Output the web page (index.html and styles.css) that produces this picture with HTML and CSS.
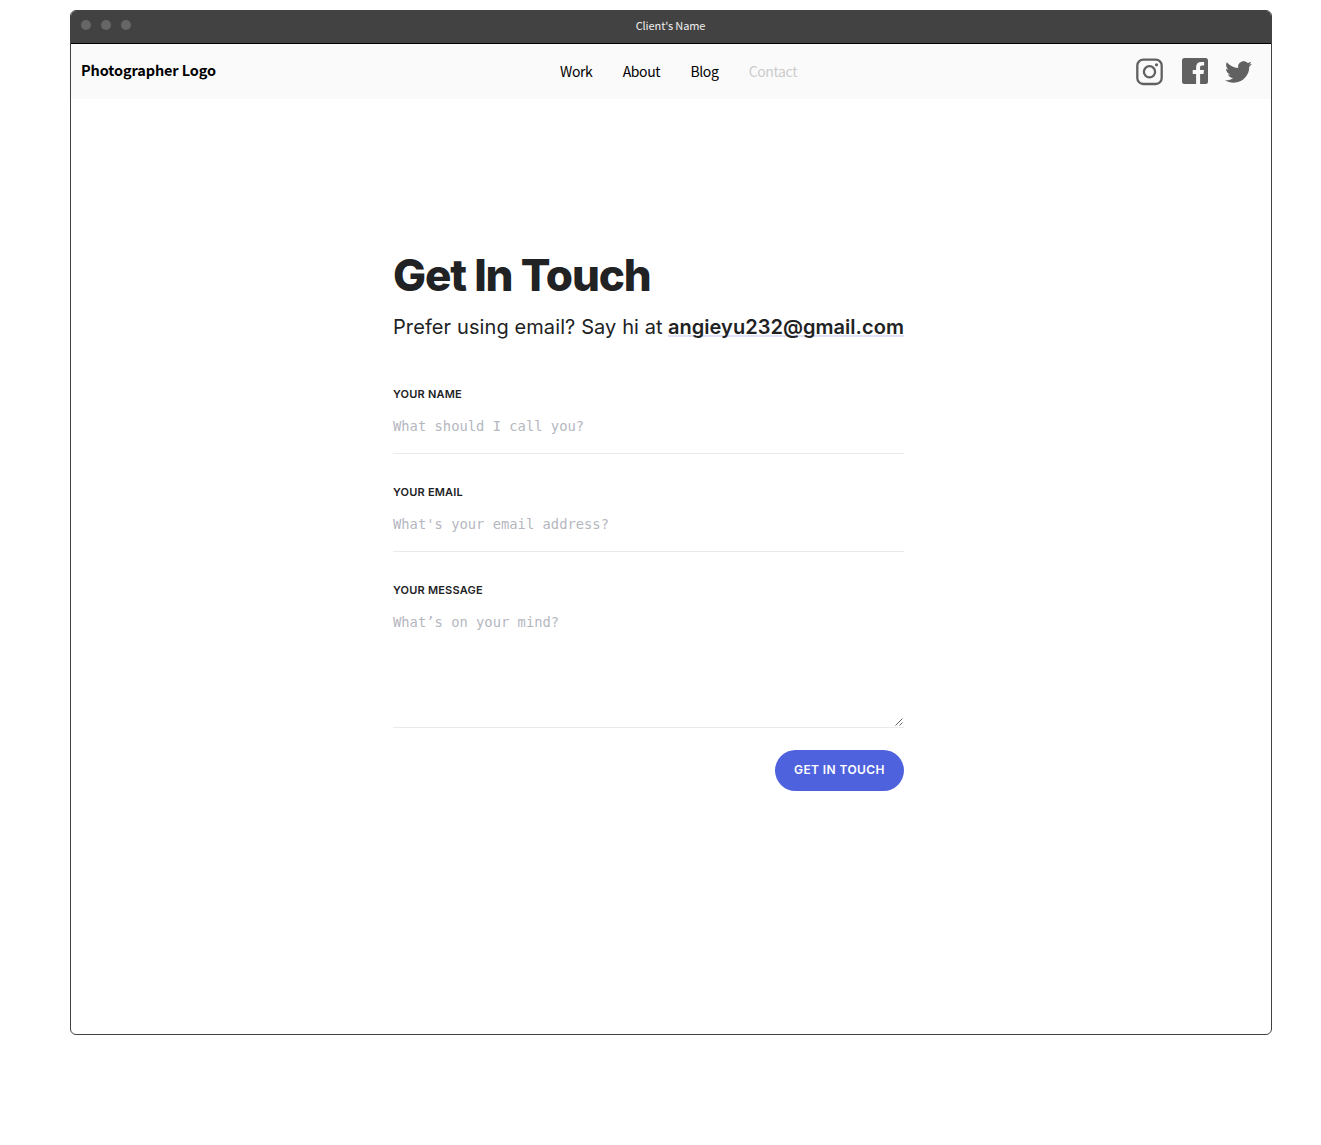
FILE: index.html
```html
<!DOCTYPE html>
<html lang="en">
<head>
<meta charset="utf-8">
<title>Client's Name</title>
<link rel="stylesheet" href="styles.css">
</head>
<body>
<div class="window">
  <div class="titlebar">
    <div class="dots"><i></i><i></i><i></i></div>
    <span class="title">Client's Name</span>
  </div>
  <header class="header">
    <div class="logo"><span>Photographer Logo</span></div>
    <nav class="nav"><a>Work</a><a>About</a><a>Blog</a><a class="current">Contact</a></nav>
    <div class="social">
      <svg class="instagram" width="28" height="28" viewBox="0 0 28 28"><rect x="1.300" y="1.600" width="24.400" height="24.400" rx="6" fill="none" stroke="#616161" stroke-width="2.300"/><circle cx="13.500" cy="13.800" r="5.600" fill="none" stroke="#616161" stroke-width="2.300"/><circle cx="20.500" cy="6.800" r="1.600" fill="#616161"/></svg>
      <svg class="facebook" width="26" height="26" viewBox="0 0 26 26"><path fill="#616161" d="M2.500 0H23.500Q26 0 26 2.500V23.500Q26 26 23.500 26H18.100V16H21.500L22 12H18.100V9.500C18.100 8.300 18.500 7.600 20 7.600H22.100V4.100C21.700 4 20.500 3.900 19.100 3.900C16.100 3.900 14.100 5.700 14.100 9V12H10.700V16H14.100V26H2.500Q0 26 0 23.500V2.500Q0 0 2.500 0Z"/></svg>
      <svg class="twitter" width="27" height="22" viewBox="0 2 24 20" preserveAspectRatio="none"><path fill="#616161" d="M23.954 4.569c-.885.389-1.830.654-2.825.775 1.014-.611 1.794-1.574 2.163-2.723-.951.555-2.005.959-3.127 1.184-.896-.959-2.173-1.559-3.591-1.559-2.717 0-4.920 2.203-4.920 4.917 0 .390.045.765.127 1.124C7.691 8.094 4.066 6.130 1.640 3.161c-.427.722-.666 1.561-.666 2.475 0 1.710.870 3.213 2.188 4.096-.807-.026-1.566-.248-2.228-.616v.061c0 2.385 1.693 4.374 3.946 4.827-.413.111-.849.171-1.296.171-.314 0-.615-.030-.916-.086.631 1.953 2.445 3.377 4.604 3.417-1.680 1.319-3.809 2.105-6.102 2.105-.390 0-.779-.023-1.170-.067 2.189 1.394 4.768 2.209 7.557 2.209 9.054 0 13.999-7.496 13.999-13.986 0-.209 0-.420-.015-.630.961-.689 1.800-1.560 2.460-2.548z"/></svg>
    </div>
  </header>
  <main class="contact">
    <h1><span>Get In Touch</span></h1>
    <p class="intro"><span class="lead">Prefer using email? Say hi at</span> <a class="email">angieyu232@gmail.com</a></p>
    <div class="field"><div class="label"><span>YOUR NAME</span></div><div class="input"><span>What should I call you?</span></div></div>
    <div class="field"><div class="label"><span>YOUR EMAIL</span></div><div class="input"><span>What's your email address?</span></div></div>
    <div class="field"><div class="label"><span>YOUR MESSAGE</span></div><div class="input message"><span>What’s on your mind?</span>
      <svg class="grip" width="8" height="8" viewBox="0 0 8 8"><path d="M0.500 7.500L7.500 0.500M4.500 7.500L7.500 4.500" stroke="#666" stroke-width="1"/></svg></div></div>
    <button class="submit" type="button">GET IN TOUCH</button>
  </main>
</div>
</body>
</html>
```
FILE: styles.css
```css
* { box-sizing: border-box; }
body {
  margin: 0;
  padding: 10px 49px 0 70px;
  background: #fff;
  font-family: "Noto Sans CJK SC", "Noto Sans", sans-serif;
}
.window {
  width: 1202px;
  height: 1025px;
  border: 1px solid #424242;
  border-radius: 6px;
  overflow: hidden;
}
.titlebar {
  display: grid;
  grid-template-columns: 1fr auto 1fr;
  height: 33px;
  padding: 0 11px 0 10px;
  background: #424242;
  border-bottom: 1px solid #000;
}
.dots { display: flex; gap: 10px; padding: 9px 0 0 0.4px; }
.dots i { width: 10px; height: 10px; border-radius: 50%; background: #666; }
.title { color: #eee; font-size: 11px; line-height: 29px; letter-spacing: -0.1px; }
.header {
  display: grid;
  grid-template-columns: 479px 1fr auto;
  height: 55px;
  padding: 0 19px 0 10px;
  background: #fafafa;
}
.logo { font-size: 14.500px; font-weight: 700; line-height: 52px; letter-spacing: -0.12px; }
.nav { display: flex; gap: 30.200px; font-size: 14px; line-height: 54px; letter-spacing: -0.37px; }
.nav .current { color: #ccc; }
.social { display: flex; padding-top: 14px; }
.facebook { margin: 0 0 0 18px; }
.twitter { margin: 3px 0 0 17px; }
.contact {
  display: flex;
  flex-direction: column;
  width: 511px;
  margin: 148px 0 0 322px;
  color: #212224;
  font-family: Inter, sans-serif;
}
h1 { margin: 0; font-size: 44px; font-weight: 800; line-height: 56px; letter-spacing: -1.200px; white-space: nowrap; }
.intro { display: flex; justify-content: space-between; margin: 10px 0 0; font-size: 20px; line-height: 28px; white-space: nowrap; }
.lead { letter-spacing: 0.1px; }
.email { height: 24px; font-weight: 600; letter-spacing: 0.04px; border-bottom: 2px solid #dfe2fa; }
.field { margin-top: 25px; }
.intro + .field { margin-top: 40px; }
.label { font-size: 11px; font-weight: 600; line-height: 26px; letter-spacing: 0.2px; }
.input {
  display: flex;
  justify-content: space-between;
  height: 47px;
  padding-top: 6px;
  border-bottom: 1px solid #eaeaea;
  color: #b5b7bf;
  font: 13.800px/26px "DejaVu Sans Mono", monospace;
}
.input.message { height: 125px; }
.grip { align-self: flex-end; margin: 0 1px 1px 0; fill: none; }
.submit {
  align-self: flex-end;
  width: 129px;
  height: 41px;
  margin-top: 22px;
  padding: 0 0 2px;
  border: 0;
  border-radius: 21px;
  background: #4f62dd;
  color: #fff;
  font: 600 12px Inter, sans-serif;
  letter-spacing: 0.4px;
}
```
